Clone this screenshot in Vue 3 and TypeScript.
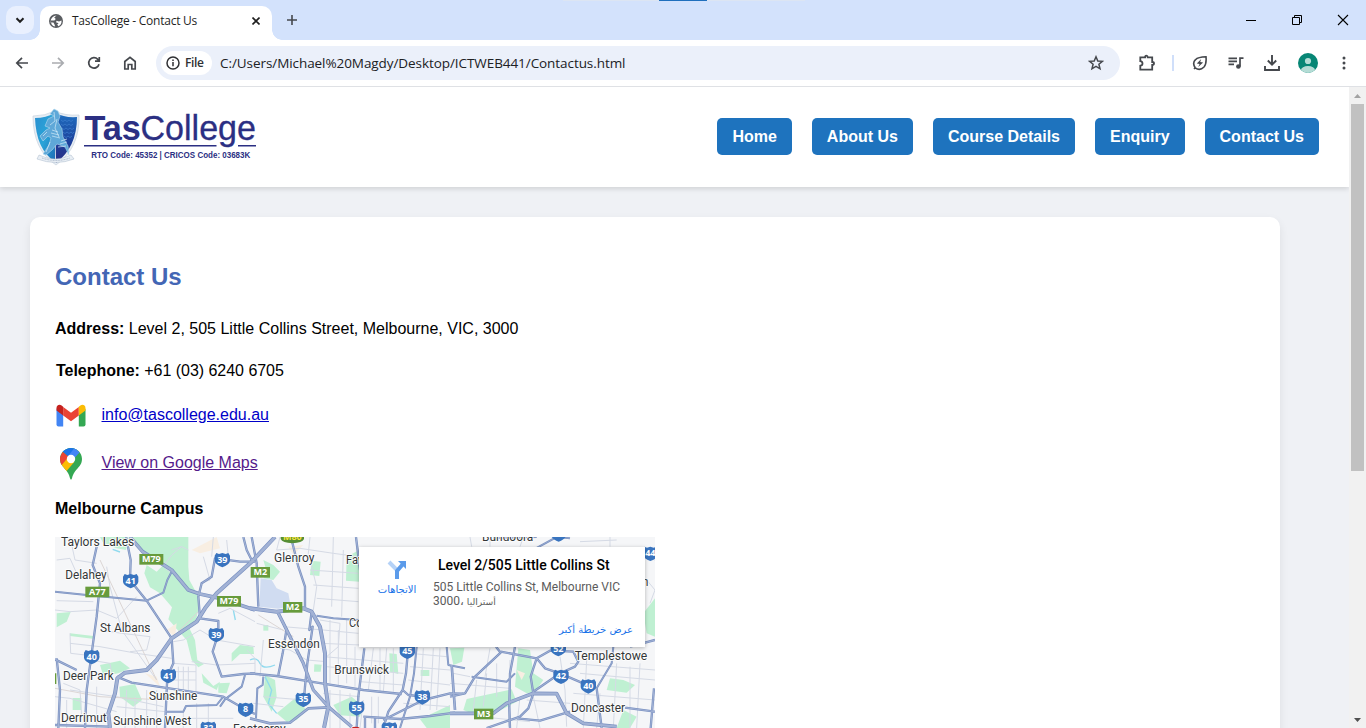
<script setup lang="ts">
interface Road { d: string; w?: number }
interface Label { t: string; x: number; y: number; w: number }
interface Badge { t: string; x: number; y: number }

const navItems: string[] = ['Home', 'About Us', 'Course Details', 'Enquiry', 'Contact Us']

// Map geometry uses three units per CSS pixel.
const parks: string[] = [
  'M235 21H415V110L418 150L440 190L450 215L440 262L425 288L375 290L355 268L366 232L330 190L300 172L283 130L290 105L320 125L345 100L280 62Z',
  'M372 288L412 282L435 330L442 390L462 402L445 412L425 390L410 330Z',
  'M150 21H235L228 60L200 55L160 40Z', 'M20 250L62 246L50 275L20 292Z', 'M60 310L130 318L128 326L60 318Z',
  'M150 405L210 392L240 415L205 430L160 438Z', 'M208 470L255 462L276 510L250 530L210 500Z', 'M68 504H94V540H68Z',
  'M505 460L540 458L530 490L505 488Z', 'M545 370L570 345L610 350L612 372L570 372L545 395Z', 'M455 430L490 468L510 455L500 480L460 458Z',
  'M540 205L575 210L558 232Z', 'M640 90L670 105L690 125L670 150L640 145L650 125Z', 'M785 92L812 95L808 138L780 135Z',
  'M890 80L928 60V155L888 152Z', 'M640 285H655V302H640Z', 'M645 435L675 450L680 500L665 545L640 500Z',
  'M680 550L735 505L770 540L740 570L710 575Z', 'M850 525L905 500L940 530L930 560L870 556Z', 'M793 403L815 404L812 425L792 425Z',
  'M1018 370L1040 372L1045 432L1020 425Z', 'M1112 420H1138V438H1112Z', 'M1110 568L1200 525V594H1130Z',
  'M1200 355L1243 353L1236 395L1210 405Z', 'M1250 507L1385 478L1400 515L1330 552L1270 552L1240 540Z',
  'M1405 355L1440 360L1450 430L1480 450L1455 485L1430 490L1395 470Z', 'M1680 445L1720 450L1755 465L1730 488L1670 480Z',
  'M1780 250L1815 205V320L1790 310Z', 'M1720 540L1760 560L1740 594H1700Z', 'M1460 80L1490 70L1490 120H1460Z'
]
const sands: string[] = ['M425 60L500 21L510 55L450 70Z', 'M350 300L380 280L375 320Z', 'M285 430L320 440L330 470Z', 'M715 50L760 45L730 75Z', 'M1400 420L1425 430L1415 450Z']
const minors: string[] = [
  'M20 90L60 85L80 130L110 140', 'M60 21L75 90L140 100', 'M170 110L180 170L215 300L320 450', 'M15 240L60 245L140 240L200 265L260 200',
  'M20 212L130 215', 'M60 340L150 350L260 370L365 385', 'M60 310L62 370L150 380', 'M150 300L215 310L300 320L290 360L240 365',
  'M365 60L395 50L415 60', 'M365 130L340 110L365 75L395 50', 'M490 21L485 80', 'M460 80L480 150L450 160', 'M530 30L535 80',
  'M370 335L400 330L450 300L500 330L615 350', 'M505 250L540 235L615 275', 'M370 400L438 405V500', 'M385 410V480', 'M400 410V480', 'M415 410V480', 'M370 425H438', 'M370 450H438',
  'M40 460L90 480L95 560', 'M60 480L200 500L340 530', 'M15 500L60 505L200 545', 'M50 510V594', 'M140 470V594', 'M230 480L225 594', 'M255 500V594', 'M290 480V594', 'M320 480V594', 'M200 530L345 545',
  'M400 545V594', 'M440 520V594', 'M475 520V594', 'M400 565H550', 'M120 390L180 400L185 430', 'M425 395L500 405L615 400',
  'M690 21L680 60L750 55L850 70L925 80', 'M780 21L775 70L800 170L790 240', 'M850 21L845 230', 'M880 60L875 260', 'M780 120L925 130', 'M790 165L925 175', 'M800 205L925 215',
  'M810 270L870 280L865 350L830 380', 'M700 290L820 300L925 310', 'M840 270V460', 'M865 300V470', 'M890 270V460', 'M915 350V470', 'M815 340L930 345',
  'M820 380L1060 400', 'M830 410L1060 430', 'M640 330L630 440', 'M660 350L720 360L770 390L830 395', 'M620 280L700 300', 'M970 355L955 480', 'M990 355V485', 'M1010 355L1000 485', 'M1030 355V485', 'M930 455L1060 465',
  'M820 490L930 500', 'M840 480V594', 'M870 480V594', 'M900 490V594', 'M940 510L930 594', 'M965 500V580', 'M985 500V580', 'M640 500L760 510', 'M610 520L700 530',
  'M1080 370L1190 380', 'M1080 410L1200 420', 'M1075 450L1200 465', 'M1120 355L1110 540', 'M1150 355L1140 540', 'M1170 355L1160 540', 'M1060 520L1200 530', 'M1200 460L1380 475', 'M1210 430L1260 440',
  'M1280 450L1270 540', 'M1310 430L1300 530', 'M1340 400V500', 'M1380 390L1375 590', 'M1320 355L1305 440', 'M1290 560L1440 575', 'M1410 500L1400 594', 'M1450 500L1470 594', 'M1430 510L1560 520',
  'M1530 380L1545 480L1550 590', 'M1560 400L1815 420', 'M1590 430L1700 440L1815 450', 'M1570 490L1815 510', 'M1700 400L1690 594', 'M1740 410V594', 'M1770 400L1760 594', 'M1650 490L1640 594', 'M1610 390L1600 594',
  'M1260 21L1265 50', 'M1320 21V50', 'M1420 21L1410 50', 'M1590 35L1700 30', 'M1680 21V50', 'M1785 80L1815 90', 'M1790 150L1815 180L1800 220', 'M590 360L615 385V430'
]
const roads: Road[] = [
  { d: 'M140 50L128 105L150 160L140 260L125 370L110 480L105 594' },
  { d: 'M15 185L110 195L290 212L340 188L352 150L365 125', w: 6 },
  { d: 'M228 21L242 90L240 150L290 212L365 325L370 400L352 440L345 594' },
  { d: 'M615 95L570 95L520 88L495 85L485 140L455 160L445 200L450 265L505 273L505 310L488 365L515 440L580 432L615 430', w: 7 },
  { d: 'M15 388L80 420M200 440L245 458L520 500L580 535L615 552' },
  { d: 'M510 530L525 508L575 470L585 435M345 545L400 545L408 528L500 525L520 500', w: 6 },
  { d: 'M20 385L30 480L25 594M15 585L180 590', w: 7 },
  { d: 'M580 21L590 60L605 90', w: 7 },
  { d: 'M605 21L620 100L625 230' },
  { d: 'M725 30L745 110L765 170L765 235' },
  { d: 'M685 250L715 310L760 400L790 480L835 530L905 590', w: 10 },
  { d: 'M785 245L778 300L788 290L772 400L765 470L760 530' },
  { d: 'M800 257L850 265L925 270L990 280', w: 6 },
  { d: 'M710 295L698 370L685 435' },
  { d: 'M600 430L680 438L815 460L940 480L1055 492' },
  { d: 'M600 565L660 580L720 578L775 535L835 532', w: 8 },
  { d: 'M640 440L638 465L622 475L618 565', w: 6 },
  { d: 'M918 21L930 120M943 355L925 500L920 594' },
  { d: 'M1075 350L1068 430L1058 480L1015 545L1000 594' },
  { d: 'M1100 350L1092 430L1080 500L1050 594', w: 6 },
  { d: 'M1058 480L1075 495L1120 500M1000 570L1060 540L1120 510L1200 490L1240 491' },
  { d: 'M940 560L1050 567L1140 558L1215 548M945 560V594M975 565V594', w: 7 },
  { d: 'M1190 350L1195 405L1245 415', w: 6 },
  { d: 'M1338 350L1352 368L1275 440L1245 490L1200 500' },
  { d: 'M1352 365L1460 385L1450 415L1442 440L1450 490L1435 535L1410 560L1310 594' },
  { d: 'M1460 385L1500 362L1570 365L1585 395L1575 410L1530 430L1450 485' },
  { d: 'M1460 385L1485 415L1530 430L1600 460L1640 475L1655 594', w: 7 },
  { d: 'M1395 350L1380 430L1378 530L1380 594' },
  { d: 'M1690 350L1685 400L1640 475', w: 6 },
  { d: 'M1812 475L1802 594M1725 533L1815 545M1400 565L1470 572L1560 545', w: 7 },
  { d: 'M1740 350L1815 330' }, { d: 'M1205 405L1215 540', w: 8 },
  { d: 'M1265 440L1370 455L1395 430', w: 6 },
  { d: 'M1430 70L1520 21L1560 25M1330 24L1460 21', w: 6 },
  { d: 'M240 21L278 65L330 98L365 120L415 180L450 192L510 205L615 240', w: 11 },
  { d: 'M180 594L175 550L195 490L202 445L225 428L290 420L320 390L365 325L440 275L465 235L500 190L605 95L675 21', w: 12 },
  { d: 'M600 235L680 245L760 235L785 245L810 290L825 370L825 460L835 530L822 594', w: 12 },
  { d: 'M1200 550L1330 550L1370 520L1450 490L1520 491L1550 550L1600 580L1700 590', w: 11 }
]
const labels: Label[] = [
  { t: 'Taylors Lakes', x: 33, y: 48, w: 220 }, { t: 'Delahey', x: 46, y: 147, w: 124 }, { t: 'St Albans', x: 150, y: 306, w: 151 },
  { t: 'Deer Park', x: 39, y: 450, w: 152 }, { t: 'Sunshine', x: 297, y: 510, w: 145 }, { t: 'Derrimut', x: 33, y: 577, w: 137 },
  { t: 'Sunshine West', x: 190, y: 585, w: 234 }, { t: 'Glenroy', x: 672, y: 97, w: 121 }, { t: 'Fawkner', x: 888, y: 103, w: 125 },
  { t: 'Coburg', x: 897, y: 291, w: 106 }, { t: 'Essendon', x: 654, y: 354, w: 155 }, { t: 'Brunswick', x: 853, y: 432, w: 164 },
  { t: 'Footscray', x: 549, y: 610, w: 158 }, { t: 'Bundoora', x: 1296, y: 33, w: 154 }, { t: 'Templestowe', x: 1574, y: 391, w: 218 },
  { t: 'Doncaster', x: 1563, y: 547, w: 162 }, { t: 'Eltham', x: 1690, y: 168, w: 105 }
]
const shields: Badge[] = [
  { t: '41', x: 242, y: 152 }, { t: '39', x: 517, y: 89 }, { t: '39', x: 499, y: 314 }, { t: '40', x: 125, y: 380 },
  { t: '41', x: 355, y: 437 }, { t: '8', x: 587, y: 538 }, { t: '32', x: 475, y: 595 }, { t: '35', x: 760, y: 508 },
  { t: '55', x: 920, y: 534 }, { t: '45', x: 1072, y: 364 }, { t: '38', x: 1117, y: 501 }, { t: '34', x: 1018, y: 597 },
  { t: '52', x: 1525, y: 356 }, { t: '42', x: 1533, y: 439 }, { t: '40', x: 1615, y: 468 }, { t: '44', x: 1801, y: 70 }, { t: '46', x: 1526, y: 12 }
]
const motorways: Badge[] = [
  { t: 'M79', x: 304, y: 88 }, { t: 'A77', x: 142, y: 186 }, { t: 'M79', x: 537, y: 214 }, { t: 'M2', x: 631, y: 127 },
  { t: 'M2', x: 728, y: 232 }, { t: 'M3', x: 1301, y: 552 }
]
const badgeWidth = (t: string): number => (t.length > 2 ? 72 : 58)
</script>

<template>
  <div class="window">
    <div class="tabstrip">
      <span class="top-hint"></span>
      <button class="tab-search">
        <svg width="28" height="28" viewBox="0 0 28 28"><path d="M10.5 12.3L14 15.8L17.5 12.3" fill="none" stroke="#1f1f1f" stroke-width="2" /></svg>
      </button>
      <div class="tab">
        <svg class="globe" width="14" height="14" viewBox="0 0 14 14"><circle cx="7" cy="7" r="7" fill="#5a5d61" /><path d="M7.6 1.4L5.2 3.4L6.8 5.1L5.4 6.4H1.5Q1.2 7.4 1.5 8.4L4.4 8.6L5.4 10.3L6.2 12.6Q4 12.4 2.7 10.6L1.4 7Q2.5 2 7.6 1.4ZM12.5 6.4Q13 10.4 9.4 12.2L8.2 10.6L9.6 9.2L7 8.2L7.6 6.8L10 7.4Z" fill="#fff" /></svg>
        <span class="tab-title">TasCollege - Contact Us</span>
        <svg class="tab-close" width="8" height="8" viewBox="0 0 8 8"><path d="M.5 .5L7.5 7.5M7.5 .5L.5 7.5" stroke="#1f1f1f" stroke-width="1.6" /></svg>
      </div>
      <svg class="new-tab" width="10" height="10" viewBox="0 0 10 10"><path d="M5 0V10M0 5H10" stroke="#45484d" stroke-width="1.6" /></svg>
      <div class="window-controls">
        <svg width="12" height="12" viewBox="0 0 12 12"><path d="M1 6.5H11" stroke="#000" /></svg>
        <svg width="12" height="12" viewBox="0 0 12 12" fill="none" stroke="#000"><path d="M1.5 3.5H8.5V10.5H1.5ZM3.5 3.5V1.5H10.5V8.5H8.5" /></svg>
        <svg width="12" height="12" viewBox="0 0 12 12"><path d="M1 1L11 11M11 1L1 11" stroke="#000" stroke-width="1.1" /></svg>
      </div>
    </div>

    <div class="toolbar">
      <div class="nav-icons">
        <svg width="16" height="16" viewBox="0 0 16 16"><path d="M14 8H3M8 2.8L2.8 8L8 13.2" /></svg>
        <svg class="disabled" width="16" height="16" viewBox="0 0 16 16"><path d="M2 8H13M8 2.8L13.2 8L8 13.2" /></svg>
        <svg width="16" height="16" viewBox="0 0 16 16"><path d="M13 9.2A5.2 5.2 0 1 1 11.8 4.4L13 5.6M13.3 2V6.2H9" /></svg>
        <svg width="16" height="16" viewBox="0 0 16 16"><path d="M2.8 14V6.5L8 2.3L13.2 6.5V14H9.8V9.5H6.2V14Z" /></svg>
      </div>
      <div class="omnibox">
        <span class="file-chip">
          <svg width="14" height="14" viewBox="0 0 14 14"><circle cx="7" cy="7" r="6" fill="none" stroke="#303134" stroke-width="1.5" /><path d="M7 6V10.3M7 3.6V5" stroke="#303134" stroke-width="1.5" /></svg>
          <span>File</span>
        </span>
        <span class="url">C:/Users/Michael%20Magdy/Desktop/ICTWEB441/Contactus.html</span>
        <svg class="star" width="16" height="16" viewBox="0 0 16 16"><path d="M8 1.8L9.8 6L14.4 6.3L10.9 9.3L12 13.8L8 11.4L4 13.8L5.1 9.3L1.6 6.3L6.2 6Z" fill="none" stroke="#45484d" stroke-width="1.5" /></svg>
      </div>
      <div class="tool-icons">
        <svg width="18" height="18" viewBox="0 0 18 18"><path d="M2.3 3.3H7.1Q7.1 1.6 8.4 1.6Q9.7 1.6 9.7 3.3H14.2V8Q16 8 16 9.4Q16 10.8 14.2 10.8V15.6H2.3V11.7Q4.5 11.4 4.5 9.4Q4.5 7.4 2.3 7.1Z" /></svg>
        <i class="divider"></i>
        <svg width="16" height="16" viewBox="0 0 16 16"><path d="M2 14L3.2 12.8M3.2 12.8Q0 8 3.5 4.7Q6 2 14 1.8Q14.7 9 12 12Q7.8 16.2 3.2 12.8Z" stroke-width="1.6" /><path d="M9.2 4L4.8 8.5L7.6 9L6.2 12L11.1 7.4L8.2 7Z" fill="#45484d" stroke="none" /></svg>
        <svg width="16" height="16" viewBox="0 0 16 16"><path d="M.5 3.3H9M.5 6.3H9M.5 9.3H6M12 11.5V3.2H15.5" stroke-width="1.7" /><circle cx="10.4" cy="11.5" r="2.3" fill="#45484d" stroke="none" /></svg>
        <svg width="16" height="18" viewBox="0 0 16 18"><path d="M8 1V10M3.8 6.5L8 10.7L12.2 6.5M1 12V16H15V12" stroke-width="1.9" /></svg>
        <svg class="avatar" width="20" height="20" viewBox="0 0 20 20"><defs><clipPath id="avatar"><circle cx="10" cy="10" r="10" /></clipPath></defs><g clip-path="url(#avatar)" stroke="none"><path d="M0 0H20V20H0Z" fill="#078675" /><circle cx="10" cy="8" r="3.1" fill="#b4dcd5" /><ellipse cx="10" cy="17" rx="7" ry="4" fill="#b4dcd5" /></g></svg>
        <svg class="menu" width="4" height="16" viewBox="0 0 4 16"><g fill="#45484d" stroke="none"><circle cx="2" cy="3" r="1.5" /><circle cx="2" cy="8" r="1.5" /><circle cx="2" cy="13" r="1.5" /></g></svg>
      </div>
    </div>

    <div class="viewport">
      <div class="page">
        <header class="site-header">
          <svg class="logo" width="228" height="64" viewBox="30 105 228 64">
            <defs>
              <linearGradient id="blueL" x1="0" y1="0" x2="1" y2="1"><stop offset="0" stop-color="#2a8fd0" /><stop offset=".5" stop-color="#2aa4d8" /><stop offset="1" stop-color="#1d6cb5" /></linearGradient>
              <linearGradient id="blueR" x1="0" y1="0" x2="0" y2="1"><stop offset="0" stop-color="#1f6fc0" /><stop offset=".6" stop-color="#1d3f9a" /><stop offset="1" stop-color="#2a2e84" /></linearGradient>
            </defs>
            <path d="M33 116Q45 116 55 111Q65 116 79 115Q80 148 56 165Q33 150 33 116Z" fill="#e6edf4" stroke="#c8d2de" stroke-width=".7" />
            <path d="M35 118Q46 118 55 113V162Q36 149 35 118Z" fill="url(#blueL)" />
            <path d="M55 113Q65 118 77 117Q77 147 56 163Z" fill="url(#blueR)" />
            <g fill="none" stroke="#3f7fd0" stroke-width=".7"><path d="M61 120q2 3 4 0q2 3 4 0q2 3 4 0M61 124q2 3 4 0q2 3 4 0q2 3 4 0M62 128q2 3 4 0q2 3 4 0q2 3 4 0M63 132q2 3 4 0q2 3 4 0q2 3 3 0M64 136q2 3 4 0q2 3 4 0" /></g>
            <path d="M54 109L58 111L60 116L58 122L62 129L63 137L68 146L69 155L65 147L57 144L52 150L46 155L43 154L49 145L51 138L48 136L43 141L40 136L46 130L50 128L45 126L48 119L54 116L50 114Z" fill="#5fa8d8" stroke="#b4daf0" stroke-width=".6" />
            <path d="M54 112L55 121L50 125M57 119L55 128L59 137M52 130L58 132M51 133L59 135M52 136L60 138M61 141L67 139M60 144L67 142M58 147L66 146M47 132L43 136M50 142L46 152" fill="none" stroke="#d3ebf8" stroke-width=".7" />
            <path d="M39 155Q55 163 71 155L74 159Q56 166 37 159Z" fill="#e9eff5" stroke="#a9b9ca" stroke-width=".5" />
            <path d="M42 158Q56 163 70 158" fill="none" stroke="#9babc1" stroke-width=".8" stroke-dasharray="1 .6" />
            <g fill="#2b2f83" font-family="Liberation Sans, Arial, sans-serif">
              <text x="84.4" y="140" font-size="34.5" font-weight="bold" textLength="56.5" lengthAdjust="spacingAndGlyphs">Tas</text>
              <text x="140.5" y="140" font-size="34.5" stroke="#2b2f83" stroke-width=".3" textLength="115.5" lengthAdjust="spacingAndGlyphs">College</text>
              <text x="91.3" y="158" font-size="8.2" font-weight="bold" textLength="159" lengthAdjust="spacingAndGlyphs">RTO Code: 45352 | CRICOS Code: 03683K</text>
            </g>
            <path d="M84 145.7H216.5M238 145.7H256" stroke="#2b2f83" stroke-width="1.5" />
          </svg>
          <nav class="site-nav"><a v-for="item in navItems" :key="item">{{ item }}</a></nav>
        </header>

        <main class="card">
          <h2>Contact Us</h2>
          <p class="address"><b>Address:</b> Level 2, 505 Little Collins Street, Melbourne, VIC, 3000</p>
          <p class="phone"><b>Telephone:</b> +61 (03) 6240 6705</p>
          <div class="link-row mail">
            <svg width="32" height="32" viewBox="0 0 32 32"><path d="M1.5 9V24.5Q1.5 26.5 3.5 26.5H8.2V13Z" fill="#4285f4" /><path d="M23.8 13V26.5H28.5Q30.5 26.5 30.5 24.5V9Z" fill="#34a853" /><path d="M8.2 7L16 12.8L23.8 7V15.4L16 21.2L8.2 15.4Z" fill="#ea4335" /><path d="M1.5 8.2Q1.5 4.7 4.8 4.7Q6 4.7 8.2 6.7V15.4L1.5 10.6Z" fill="#c5221f" /><path d="M30.5 8.2Q30.5 4.7 27.2 4.7Q26 4.7 23.8 6.7V15.4L30.5 10.6Z" fill="#fbbc04" /></svg>
            <a>info@tascollege.edu.au</a>
          </div>
          <div class="link-row maps">
            <svg width="32" height="32" viewBox="0 0 32 32">
              <defs><clipPath id="pin"><path d="M16 0C9.6 0 5 5 5 11C5 17 9.2 19.5 12 23.5C14 26.5 14.6 28.5 15 30.3Q16 33 17 30.3C17.5 28 18.3 26 20 23.5C23 19.5 27 17 27 11C27 5 22.4 0 16 0Z" /></clipPath></defs>
              <g clip-path="url(#pin)"><path d="M0 0H32V32H0Z" fill="#34a853" /><path d="M0 -4H24L20 6.5L16 11L8 4Z" fill="#1a73e8" /><path d="M19.5 0L24.7 4.2L17 13L12.8 8.2Z" fill="#4285f4" /><path d="M7.6 3.8L13.8 9L7 17.5L2 14Z" fill="#ea4335" /><path d="M6.5 17.2L12.8 9.8L19.3 14L11.2 23.5Z" fill="#fbbc04" /></g>
              <circle cx="16" cy="11" r="4.2" fill="#fff" />
            </svg>
            <a class="visited">View on Google Maps</a>
          </div>
          <p class="campus"><b>Melbourne Campus</b></p>
          <div class="map">
            <svg width="600" height="191" viewBox="15 21 1800 573">
              <path d="M15 21H1815V594H15Z" fill="#f5f6f8" />
              <path v-for="(d, i) in parks" :key="'p' + i" :d="d" fill="#bff0d2" />
              <path v-for="(d, i) in sands" :key="'s' + i" :d="d" fill="#f8eee2" />
              <path d="M632 145L665 150L680 175L715 190L722 228L685 236L628 230Z" fill="#d0dcf1" />
              <path d="M600 390Q620 380 630 400T675 405M645 440L665 480L655 520L680 550M188 58L210 66M550 240L556 270" fill="none" stroke="#90daee" stroke-width="4" />
              <g fill="none" stroke-linejoin="round">
                <path v-for="(d, i) in minors" :key="'m' + i" :d="d" stroke="#d5dae5" stroke-width="3" />
                <path d="M15 475L150 500L340 510M150 90L320 450M625 255L730 320M365 325L445 245" stroke="#dcd6d5" stroke-width="3" />
                <path v-for="(r, i) in roads" :key="'c' + i" :d="r.d" stroke="#7a91c1" :stroke-width="r.w ?? 7" />
                <path v-for="(r, i) in roads" :key="'r' + i" :d="r.d" stroke="#a2b2d5" :stroke-width="(r.w ?? 7) - 4" />
              </g>
              <g class="place-labels"><text v-for="l in labels" :key="l.t" :x="l.x" :y="l.y" :textLength="l.w" lengthAdjust="spacingAndGlyphs">{{ l.t }}</text></g>
              <g v-for="(s, i) in shields" :key="'h' + i" :transform="`translate(${s.x} ${s.y})`" class="badge">
                <path d="M-18 -20L-10 -17L0 -20L10 -17L18 -20L23 -12V4Q20 16 0 23Q-20 16 -23 4V-12Z" fill="#3974bf" />
                <text y="9">{{ s.t }}</text>
              </g>
              <g v-for="(m, i) in motorways" :key="'w' + i" :transform="`translate(${m.x} ${m.y})`" class="badge">
                <rect :x="-badgeWidth(m.t) / 2" y="-16" :width="badgeWidth(m.t)" height="32" fill="#679b3c" />
                <text y="9">{{ m.t }}</text>
              </g>
              <g transform="translate(727 22)" class="badge gold"><path d="M-35 -20H35V5Q30 16 0 18Q-30 16 -35 5Z" fill="#568e35" /><text y="8">M80</text></g>
              <path d="M15 430H19V462H15Z" fill="#679b3c" /><ellipse cx="917" cy="597" rx="13" ry="7" fill="#c5221f" />
            </svg>
            <div class="place-card">
              <div class="directions">
                <svg width="20" height="20" viewBox="0 0 20 20"><path d="M2 2L10 10V18" fill="none" stroke="#b5d2f7" stroke-width="4" /><path d="M10 19V11L16 4" fill="none" stroke="#5b9bea" stroke-width="4" /><path d="M11 1H19V9Z" fill="#5b9bea" /></svg>
                <span dir="rtl">الاتجاهات</span>
              </div>
              <div class="place-text">
                <strong>Level 2/505 Little Collins St</strong>
                <span class="street">505 Little Collins St, Melbourne VIC</span>
                <span class="country" dir="rtl"><i>أستراليا</i> ،3000</span>
              </div>
              <a class="larger" dir="rtl">عرض خريطة أكبر</a>
            </div>
          </div>
        </main>
      </div>
      <div class="scrollbar">
        <svg width="17" height="17" viewBox="0 0 17 17"><path d="M5 11L8.5 7L12 11Z" fill="#a3a3a3" /></svg>
        <i class="thumb"></i>
        <svg class="down" width="17" height="17" viewBox="0 0 17 17"><path d="M5 7L8.5 11L12 7Z" fill="#505050" /></svg>
      </div>
    </div>
  </div>
</template>

<style>
html, body { margin: 0; overflow: hidden; }
</style>

<style scoped>
* { box-sizing: border-box; }
svg { display: block; flex: none; }
.window { width: 1366px; height: 728px; overflow: hidden; display: flex; flex-direction: column; background: #fff; font-family: "Liberation Sans", Arial, sans-serif; }
.tabstrip { position: relative; height: 40px; flex: none; display: flex; padding: 6px 0 0 6px; background: #d3e2fc; }
.top-hint { position: absolute; top: 0; left: 563px; width: 242px; height: 1px; background: linear-gradient(90deg, #dce5f3 96px, #1f6fbd 96px, #1f6fbd 144px, #dce5f3 144px); }
.tab-search { width: 28px; height: 28px; padding: 0; border: 0; border-radius: 10px; background: #e9f0fe; flex: none; }
.tab { position: relative; margin-left: 6px; width: 232px; height: 34px; padding: 0 12px 4px 9px; display: flex; align-items: center; border-radius: 10px 10px 0 0; background: #fff; }
.tab::before, .tab::after { content: ""; position: absolute; bottom: 0; width: 10px; height: 10px; }
.tab::before { left: -10px; background: radial-gradient(circle at 0 0, transparent 9.5px, #fff 10px); }
.tab::after { right: -10px; background: radial-gradient(circle at 100% 0, transparent 9.5px, #fff 10px); }
.tab-title { margin-left: 9px; flex: 1; white-space: nowrap; font: 12px/18px "Open Sans", "Noto Sans", sans-serif; letter-spacing: -.24px; color: #1f1f1f; }
.new-tab { margin: 9px 0 0 15px; }
.window-controls { margin-left: auto; margin-right: 17px; padding-top: 8px; display: flex; gap: 34px; }
.toolbar { height: 47px; flex: none; display: flex; align-items: center; padding: 0 20px 1px 14px; border-bottom: 1px solid #dfe1e5; background: #fff; }
.nav-icons { display: flex; gap: 20px; }
.nav-icons svg { fill: none; stroke: #45484d; stroke-width: 1.7; }
.nav-icons .disabled { stroke: #aaacb0; }
.omnibox { margin-left: 18px; width: 964px; height: 34px; display: flex; align-items: center; border-radius: 17px; background: #ebf0fa; padding: 0 16px 0 5px; }
.file-chip { width: 51px; height: 24px; display: flex; align-items: center; gap: 5px; padding-left: 5px; border-radius: 12px; background: #fff; font: 600 12px/24px "Open Sans", sans-serif; letter-spacing: -.4px; color: #303134; }
.url { margin-left: 8px; flex: 1; white-space: nowrap; font: 13.5px/20px "Open Sans", "Noto Sans", sans-serif; letter-spacing: -.07px; color: #202124; }
.tool-icons { margin-left: auto; display: flex; align-items: center; }
.tool-icons svg { fill: none; stroke: #45484d; stroke-width: 1.8; }
.divider { width: 2px; height: 16px; margin: 0 18px 0 16px; background: #d0dffa; }
.tool-icons svg + svg { margin-left: 20px; }
.tool-icons svg + .avatar { margin-left: 18px; }
.tool-icons svg + .menu { margin-left: 24px; }
.viewport { flex: 1; min-height: 0; display: flex; }
.page { width: 1349px; overflow: hidden; background: #eff1f5; }
.site-header { position: relative; height: 100px; display: flex; align-items: center; justify-content: space-between; padding: 0 30px; background: #fff; box-shadow: 0 2px 5px rgba(0,0,0,.13); }
.site-nav { display: flex; gap: 20px; margin-bottom: 2px; }
.site-nav a { height: 37px; padding: 0 15px; border-radius: 5px; background: #1e73be; color: #fff; font-weight: bold; font-size: 16px; line-height: 37px; white-space: nowrap; }
.card { width: 1250px; height: 600px; margin: 30px 0 0 30px; padding: 46px 25px 0; border-radius: 10px; background: #fff; box-shadow: 0 4px 10px rgba(0,0,0,.08); color: #000; font-size: 16px; line-height: 18px; }
h2 { margin: 0; height: 28px; font-size: 24px; line-height: 28px; color: #4366b5; }
p { margin: 0; }
.address { margin-top: 29px; }
.phone { margin: 24px 0 0 1px; letter-spacing: -.03px; }
.link-row { display: flex; align-items: center; gap: 14.5px; height: 32px; }
.link-row a { color: #0000c8; text-decoration: underline; }
.link-row a.visited { color: #551a8b; }
.mail { margin-top: 20px; }
.mail a { margin-top: -3px; }
.maps { margin-top: 16px; }
.maps a { margin-top: -3px; }
.campus { margin-top: 20px; }
.map { position: relative; width: 600px; height: 191px; margin-top: 19px; overflow: hidden; }
.place-labels { font: 36px Roboto, sans-serif; fill: #333638; stroke: #fff; stroke-width: 5px; paint-order: stroke; stroke-linejoin: round; }
.badge text { font: bold 27px "Open Sans", sans-serif; fill: #fff; text-anchor: middle; }
.badge.gold text { fill: #f4e33c; }
.place-card { position: absolute; left: 304px; top: 10px; width: 286px; height: 100px; display: flex; background: #fff; box-shadow: 0 1px 4px rgba(0,0,0,.28); font-family: Roboto, sans-serif; }
.directions { width: 74px; padding: 13px 0 0 2px; display: flex; flex-direction: column; align-items: center; color: #1a73e8; font: 10px/20px "DejaVu Sans", sans-serif; }
.place-text { display: flex; flex-direction: column; align-items: flex-start; padding-top: 9px; white-space: nowrap; }
.place-text strong { margin-left: 5px; font-size: 14px; line-height: 18px; font-weight: 500; color: #000; }
.street { margin-top: 6px; font-size: 12px; line-height: 14px; color: #5b5b5b; }
.country { height: 14px; font: 12px/14px Roboto, "DejaVu Sans", sans-serif; color: #5b5b5b; }
.country i { font-style: normal; font-size: 9.2px; }
.larger { position: absolute; right: 12px; bottom: 8px; color: #1a73e8; font: 10px/18px "DejaVu Sans", sans-serif; white-space: nowrap; }
.scrollbar { width: 17px; display: flex; flex-direction: column; align-items: center; background: #f1f1f1; }
.thumb { width: 13px; height: 367px; background: #c1c1c1; }
.down { margin-top: auto; }
</style>
